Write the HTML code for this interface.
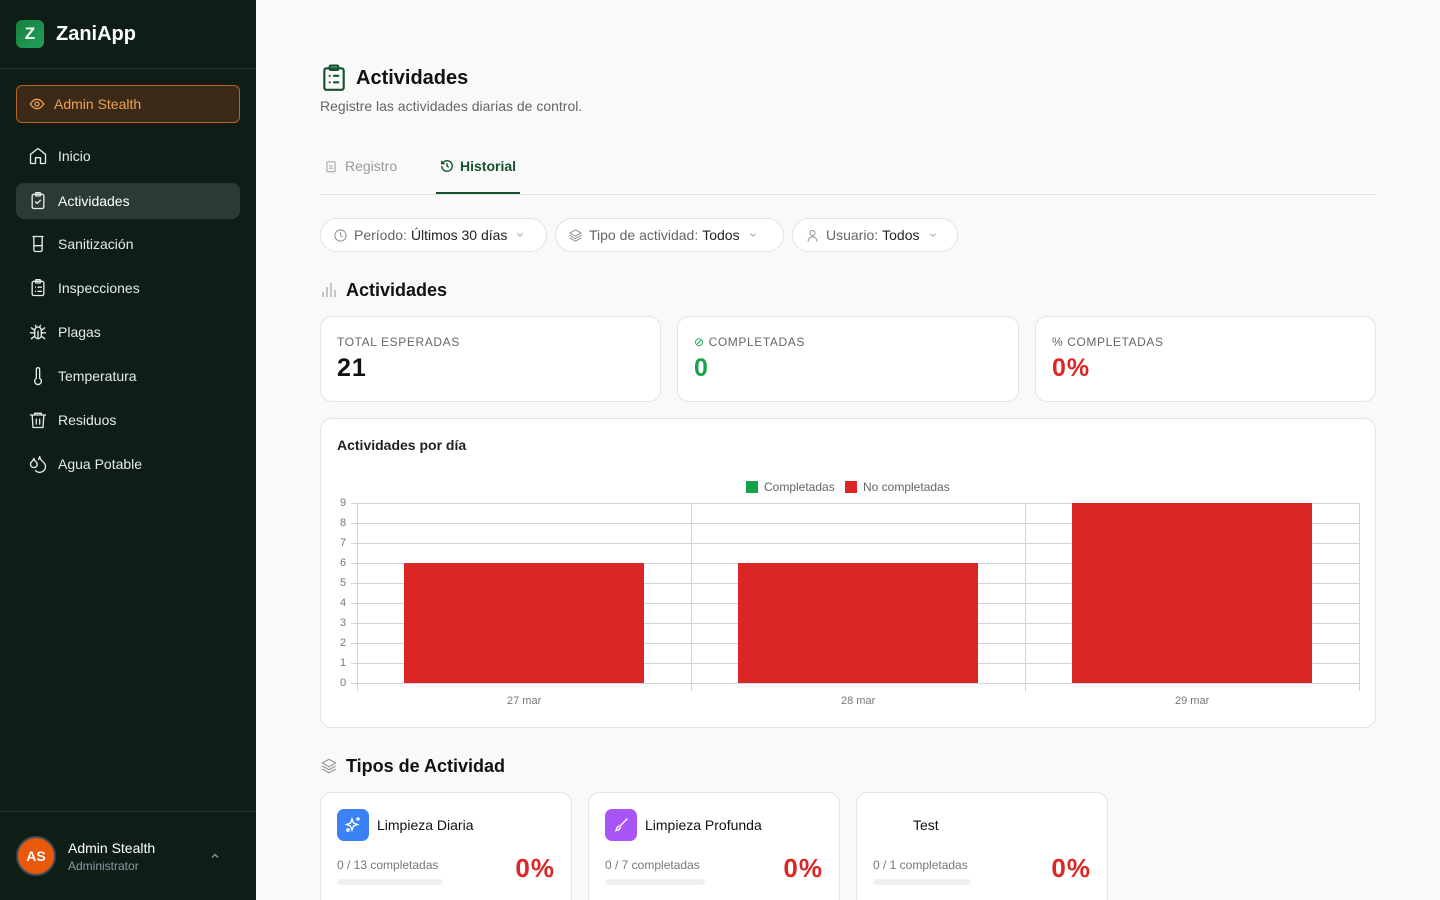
<!DOCTYPE html>
<html style="overflow:hidden;height:900px"><head><meta charset="utf-8"><style>
*{box-sizing:border-box;margin:0;padding:0}
body{width:1440px;height:900px;overflow:hidden;background:#f9f9f9;font-family:"Liberation Sans",sans-serif;position:relative;color:#111}
.sb{position:absolute;left:0;top:0;width:256px;height:900px;background:#0f1d17}
.abs{position:absolute}
.nav{position:absolute;left:16px;width:224px;height:36px;border-radius:8px;display:flex;align-items:center;padding-left:12px;color:#e6ebe8;font-size:14px}
.nav svg{width:20px;height:20px;margin-right:10px;fill:none;stroke:#e6ebe8;stroke-width:1.6;stroke-linecap:round;stroke-linejoin:round}
.card{position:absolute;background:#fff;border:1px solid #e3e3e3;border-radius:12px}
.pill{position:absolute;top:218px;height:34px;border:1px solid #e2e2e2;border-radius:17px;background:#fff;display:flex;align-items:center;padding-left:12px;font-size:14px;color:#666}
.pill b{font-weight:normal;color:#222;margin-left:4px}
.pill svg{fill:none;stroke:#888;stroke-width:1.5;stroke-linecap:round;stroke-linejoin:round}
.lbl{position:absolute;left:16px;top:18px;font-size:12px;letter-spacing:.6px;color:#666}
.val{position:absolute;left:16px;top:37px;font-size:25px;font-weight:bold;letter-spacing:1px}
.tk{position:absolute;font-size:11px;color:#777}
.pct{position:absolute;right:16px;top:60px;font-size:26px;font-weight:bold;color:#dc2626;letter-spacing:1px}
</style></head><body>
<div class="sb">
 <div class="abs" style="left:16px;top:20px;width:28px;height:28px;border-radius:6px;background:linear-gradient(135deg,#16803d,#22a05a);color:#fff;font-weight:bold;font-size:17px;text-align:center;line-height:28px">Z</div>
 <div class="abs" style="left:56px;top:23px;color:#fff;font-weight:bold;font-size:20px">ZaniApp</div>
 <div class="abs" style="left:0;top:68px;width:256px;height:1px;background:#2a3833"></div>
 <div class="abs" style="left:16px;top:85px;width:224px;height:38px;border:1px solid #b8631f;border-radius:6px;background:#3a2a17;color:#f0a055;font-size:14px;display:flex;align-items:center;padding-left:12px">
  <svg width="16" height="16" viewBox="0 0 24 24" fill="none" stroke="#f0a055" stroke-width="2"><path d="M2 12s4-7 10-7 10 7 10 7-4 7-10 7S2 12 2 12z"/><circle cx="12" cy="12" r="3"/></svg><span style="margin-left:9px">Admin Stealth</span></div>
 <div class="nav" style="top:138px"><svg viewBox="0 0 24 24"><path d="M3 10l9-7 9 7v10a1 1 0 0 1-1 1h-5v-7H9v7H4a1 1 0 0 1-1-1z"/></svg>Inicio</div>
 <div class="nav" style="top:183px;background:#2c3a35;color:#fff"><svg viewBox="0 0 24 24"><rect x="5" y="4" width="14" height="17" rx="2"/><rect x="9" y="2" width="6" height="4" rx="1"/><path d="M9 13l2 2 4-4"/></svg>Actividades</div>
 <div class="nav" style="top:226px"><svg viewBox="0 0 24 24"><path d="M6 3h12M7 3v16a2 2 0 0 0 2 2h6a2 2 0 0 0 2-2V3M7 14h10"/></svg>Sanitización</div>
 <div class="nav" style="top:270px"><svg viewBox="0 0 24 24"><rect x="5" y="4" width="14" height="17" rx="2"/><rect x="9" y="2" width="6" height="4" rx="1"/><path d="M9 11h.01M12 11h4M9 16h.01M12 16h4"/></svg>Inspecciones</div>
 <div class="nav" style="top:314px"><svg viewBox="0 0 24 24"><rect x="8" y="6" width="8" height="14" rx="4"/><path d="M12 20v-9M8 13H3M21 13h-5M4 7l4 3M20 7l-4 3M4 20l4-3M20 20l-4-3M9 4l1 2M15 4l-1 2"/></svg>Plagas</div>
 <div class="nav" style="top:358px"><svg viewBox="0 0 24 24"><path d="M14 14.8V4a2 2 0 0 0-4 0v10.8a4 4 0 1 0 4 0z"/></svg>Temperatura</div>
 <div class="nav" style="top:402px"><svg viewBox="0 0 24 24"><path d="M3 6h18M8 6V4h8v2M5 6l1 15h12l1-15M10 11v6M14 11v6"/></svg>Residuos</div>
 <div class="nav" style="top:446px"><svg viewBox="0 0 24 24"><path d="M7 16.3c2.2 0 4-1.8 4-4 0-1.2-.6-2.3-1.8-3.3S7.3 6.6 7 5.3c-.3 1.3-1 2.6-2.2 3.6S3 11.1 3 12.3c0 2.2 1.8 4 4 4zM12.6 6.6A11 11 0 0 0 14 3c.5 2.5 2 4.9 4 6.5s3 3.5 3 5.5a7 7 0 0 1-12 4.9"/></svg>Agua Potable</div>
 <div class="abs" style="left:0;top:811px;width:256px;height:1px;background:#2a3833"></div>
 <div class="abs" style="left:16px;top:836px;width:40px;height:40px;border-radius:50%;background:#ea580c;border:2px solid #3b4e5a;color:#fff;font-weight:bold;font-size:14px;text-align:center;line-height:36px">AS</div>
 <div class="abs" style="left:68px;top:840px;color:#fff;font-size:14px">Admin Stealth</div>
 <div class="abs" style="left:68px;top:859px;color:#8a9aa8;font-size:12px">Administrator</div>
 <svg class="abs" style="left:209px;top:850px" width="12" height="12" viewBox="0 0 24 24" fill="none" stroke="#8a9aa8" stroke-width="2.5"><path d="M6 15l6-6 6 6"/></svg>
</div>

<svg class="abs" style="left:321px;top:64px" width="26" height="28" viewBox="0 0 24 26" fill="none" stroke="#14532d" stroke-width="2" stroke-linecap="round"><rect x="3" y="4" width="18" height="20" rx="2"/><rect x="8" y="1.5" width="8" height="4" rx="1"/><path d="M8 11h.01M12 11h4M8 17h.01M12 17h4"/></svg>
<div class="abs" style="left:356px;top:67px;font-size:20px;font-weight:bold;color:#111">Actividades</div>
<div class="abs" style="left:320px;top:98px;font-size:14px;color:#666">Registre las actividades diarias de control.</div>

<svg class="abs" style="left:324px;top:159px" width="14" height="15" viewBox="0 0 24 24" fill="none" stroke="#aaa" stroke-width="2"><rect x="5" y="4" width="14" height="17" rx="2"/><path d="M9 11h6M9 15h6"/></svg>
<div class="abs" style="left:345px;top:158px;font-size:14px;color:#999">Registro</div>
<svg class="abs" style="left:440px;top:159px" width="14" height="14" viewBox="0 0 24 24" fill="none" stroke="#14532d" stroke-width="2.4"><path d="M3 12a9 9 0 1 0 3-6.7L3 8M3 3v5h5M12 7v5l3 2"/></svg>
<div class="abs" style="left:460px;top:158px;font-size:14px;font-weight:bold;color:#14532d">Historial</div>
<div class="abs" style="left:320px;top:194px;width:1056px;height:1px;background:#e2e2e2"></div>
<div class="abs" style="left:436px;top:192px;width:84px;height:2px;background:#14532d"></div>

<div class="pill" style="left:320px;width:227px"><svg width="15" height="15" viewBox="0 0 24 24"><circle cx="12" cy="12" r="9"/><path d="M12 7v5l3 2"/></svg><span style="margin-left:6px">Período:</span><b>Últimos 30 días</b><svg style="margin-left:8px" width="10" height="10" viewBox="0 0 24 24"><path d="M6 9l6 6 6-6"/></svg></div>
<div class="pill" style="left:555px;width:229px"><svg width="15" height="15" viewBox="0 0 24 24"><path d="M12 3l9 5-9 5-9-5zM3 12l9 5 9-5M3 16l9 5 9-5"/></svg><span style="margin-left:6px">Tipo de actividad:</span><b>Todos</b><svg style="margin-left:8px" width="10" height="10" viewBox="0 0 24 24"><path d="M6 9l6 6 6-6"/></svg></div>
<div class="pill" style="left:792px;width:166px"><svg width="15" height="15" viewBox="0 0 24 24"><circle cx="12" cy="8" r="4"/><path d="M5 21a7 7 0 0 1 14 0"/></svg><span style="margin-left:6px">Usuario:</span><b>Todos</b><svg style="margin-left:8px" width="10" height="10" viewBox="0 0 24 24"><path d="M6 9l6 6 6-6"/></svg></div>

<svg class="abs" style="left:321px;top:282px" width="16" height="16" viewBox="0 0 16 16" stroke="#aaa" stroke-width="1.3"><path d="M2 15V10M6 15V5M10 15V1M14 15V8"/></svg>
<div class="abs" style="left:346px;top:280px;font-size:18px;font-weight:bold">Actividades</div>

<div class="card" style="left:320px;top:316px;width:341px;height:86px"><div class="lbl">TOTAL ESPERADAS</div><div class="val">21</div></div>
<div class="card" style="left:677px;top:316px;width:342px;height:86px"><div class="lbl"><span style="color:#16a34a">⊘</span> COMPLETADAS</div><div class="val" style="color:#16a34a">0</div></div>
<div class="card" style="left:1035px;top:316px;width:341px;height:86px"><div class="lbl">% COMPLETADAS</div><div class="val" style="color:#dc2626">0%</div></div>

<div class="card" style="left:320px;top:418px;width:1056px;height:310px"></div>
<div class="abs" style="left:337px;top:437px;font-size:14px;font-weight:bold;color:#222">Actividades por día</div>
<div class="abs" style="left:746px;top:481px;width:12px;height:12px;background:#16a34a"></div>
<div class="abs" style="left:764px;top:480px;font-size:12px;color:#666">Completadas</div>
<div class="abs" style="left:845px;top:481px;width:12px;height:12px;background:#dc2626"></div>
<div class="abs" style="left:863px;top:480px;font-size:12px;color:#666">No completadas</div>
<svg class="abs" style="left:0;top:0" width="1440" height="900">
 <g stroke="#cfd3da" stroke-width="1">
  <path d="M351 503.5H1359M351 523.5H1359M351 543.5H1359M351 563.5H1359M351 583.5H1359M351 603.5H1359M351 623.5H1359M351 643.5H1359M351 663.5H1359M351 683.5H1359"/>
  <path d="M357.5 503V691M691.5 503V691M1025.5 503V691M1359.5 503V691"/>
 </g>
 <rect x="404" y="563" width="240" height="120" fill="#dc2626"/>
 <rect x="738" y="563" width="240" height="120" fill="#dc2626"/>
 <rect x="1072" y="503" width="240" height="180" fill="#dc2626"/>
</svg>
<div class="tk" style="left:340px;top:497px">9</div><div class="tk" style="left:340px;top:517px">8</div><div class="tk" style="left:340px;top:537px">7</div><div class="tk" style="left:340px;top:557px">6</div><div class="tk" style="left:340px;top:577px">5</div><div class="tk" style="left:340px;top:597px">4</div><div class="tk" style="left:340px;top:617px">3</div><div class="tk" style="left:340px;top:637px">2</div><div class="tk" style="left:340px;top:657px">1</div><div class="tk" style="left:340px;top:677px">0</div>
<div class="tk" style="left:507px;top:695px">27 mar</div><div class="tk" style="left:841px;top:695px">28 mar</div><div class="tk" style="left:1175px;top:695px">29 mar</div>

<svg class="abs" style="left:320px;top:757px" width="18" height="18" viewBox="0 0 24 24" fill="none" stroke="#999" stroke-width="1.6" stroke-linejoin="round"><path d="M12 3l9 5-9 5-9-5zM3 12l9 5 9-5M3 16l9 5 9-5"/></svg>
<div class="abs" style="left:346px;top:756px;font-size:18px;font-weight:bold">Tipos de Actividad</div>

<div class="card" style="left:320px;top:792px;width:252px;height:120px">
 <div class="abs" style="left:16px;top:16px;width:32px;height:32px;border-radius:7px;background:#3b82f6"><svg width="32" height="32" viewBox="0 0 32 32" fill="none" stroke="#fff" stroke-width="1.4"><path d="M15 10l1.5 4 4 1.5-4 1.5-1.5 4-1.5-4-4-1.5 4-1.5zM21 8v4M19 10h4"/><circle cx="11" cy="21" r="1.2"/></svg></div>
 <div class="abs" style="left:56px;top:24px;font-size:14px">Limpieza Diaria</div>
 <div class="abs" style="left:16px;top:65px;font-size:12px;color:#777">0 / 13 completadas</div>
 <div class="abs" style="left:16px;top:86px;width:106px;height:6px;border-radius:3px;background:#f0f0f0"></div>
 <div class="pct">0%</div>
</div>
<div class="card" style="left:588px;top:792px;width:252px;height:120px">
 <div class="abs" style="left:16px;top:16px;width:32px;height:32px;border-radius:7px;background:#a855f7"><svg width="32" height="32" viewBox="0 0 32 32" fill="none" stroke="#fff" stroke-width="1.4" stroke-linecap="round"><path d="M22 10l-7 7M14 17l-2 1.5-1 3 3-1 1.5-2"/></svg></div>
 <div class="abs" style="left:56px;top:24px;font-size:14px">Limpieza Profunda</div>
 <div class="abs" style="left:16px;top:65px;font-size:12px;color:#777">0 / 7 completadas</div>
 <div class="abs" style="left:16px;top:86px;width:100px;height:6px;border-radius:3px;background:#f0f0f0"></div>
 <div class="pct">0%</div>
</div>
<div class="card" style="left:856px;top:792px;width:252px;height:120px">
 <div class="abs" style="left:56px;top:24px;font-size:14px">Test</div>
 <div class="abs" style="left:16px;top:65px;font-size:12px;color:#777">0 / 1 completadas</div>
 <div class="abs" style="left:16px;top:86px;width:98px;height:6px;border-radius:3px;background:#f0f0f0"></div>
 <div class="pct">0%</div>
</div>
</body></html>
